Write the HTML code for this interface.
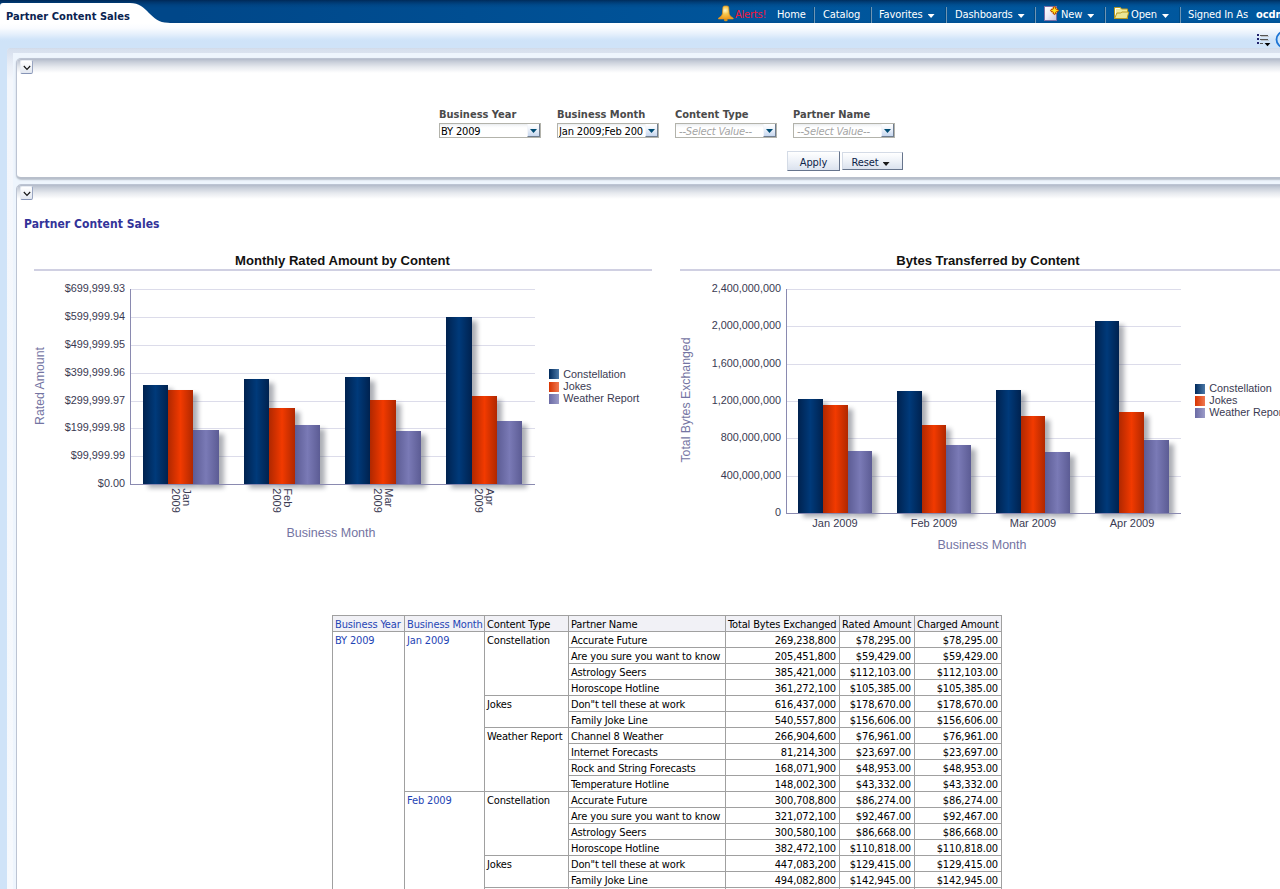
<!DOCTYPE html>
<html>
<head>
<meta charset="utf-8">
<title>Partner Content Sales</title>
<style>
html,body{margin:0;padding:0;}
body{width:1280px;height:889px;overflow:hidden;position:relative;background:#cfe3f8;
 font-family:"DejaVu Sans Condensed","Liberation Sans",sans-serif;font-size:11px;color:#000;}
.abs{position:absolute;}
#hdr{left:0;top:0;width:1280px;height:23px;background:linear-gradient(rgba(0,22,56,.62) 0px,rgba(0,26,64,.40) 2px,rgba(0,30,70,.12) 5px,rgba(0,30,70,0) 8px,rgba(0,30,70,0) 20px,rgba(0,30,70,.12) 23px),linear-gradient(to right,#004789 0px,#004789 180px,#00559b 760px,#00589f 1280px);}
#tab{left:0;top:3px;width:170px;height:20px;}
#tabtxt{left:6px;top:10px;letter-spacing:0.05px;font-weight:bold;font-size:11px;color:#0a2350;white-space:nowrap;line-height:13px;}
#sub{left:0;top:23px;width:1280px;height:26px;background:linear-gradient(#ffffff 0px,#fafcff 5px,#e6f0fc 11px,#d2e5f9 16px,#cfe3f8 18px,#cfe3f8 26px);}
.nav{top:8px;color:#fff;font-size:11px;letter-spacing:-0.12px;white-space:nowrap;line-height:13px;}
.sep{top:7px;width:1px;height:16px;background:#6f95b4;border-left:1px solid #004a84;}
.car{display:inline-block;width:7px;height:4px;background:#fff;clip-path:polygon(0 0,100% 0,50% 100%);margin-left:5px;vertical-align:0px;}
#outer{left:7px;top:48px;width:1290px;height:860px;border-radius:4px;background:#eef5fd;overflow:hidden;}
#otop{left:0;top:0;width:100%;height:5px;background:linear-gradient(#cfd8e6 0px,#d6dfed 1px,#dae2ef 5px);}
#oleft{left:0;top:0;width:6px;height:100%;background:linear-gradient(#d6dfed 0px,#dae2ef 5px,#eaeff7 18px,#f4f7fc 32px,#f6f9fd 100%);}
.panel{left:16px;width:1280px;background:#fff;border:1px solid #bcc4d3;border-radius:5px;}
.pgrad{left:0;top:0;width:100%;height:14px;border-radius:4px 4px 0 0;background:linear-gradient(#b3bbca 0px,#c9cfda 3px,#e6e9ee 8px,#ffffff 14px);}
.colbtn{width:11px;height:12px;border-radius:2px;background:linear-gradient(#ffffff,#e2e7f0);border:1px solid #e8ecf3;border-right-color:#9aa6c2;border-bottom-color:#8694b6;box-sizing:content-box;}
.lbl{font-weight:bold;color:#4a4a4a;font-size:11px;white-space:nowrap;line-height:13px;}
.inp{height:13px;width:100px;border:1px solid #b3b3ab;background:linear-gradient(#e9ebee 0px,#f8f9fa 2px,#ffffff 4px);font-size:11px;line-height:13px;white-space:nowrap;overflow:hidden;}
.inp span{position:absolute;left:1px;top:1px;letter-spacing:-0.15px;}
.inp i{color:#a4a4a4;margin-left:2px;}
.dd{position:absolute;right:0;top:0;width:11px;height:12px;background:linear-gradient(#ffffff,#f2f6fc 35%,#c6d6ee);border-left:1px solid #f4f6fa;border-bottom:1px solid #6f7d90;border-right:1px solid #6f7d90;}
.dd:after{content:"";position:absolute;left:2px;top:5px;width:7px;height:4px;background:#004c74;clip-path:polygon(0 0,100% 0,50% 100%);}
.btn{height:17px;overflow:hidden;letter-spacing:-0.1px;border:1px solid #d4dbe6;border-right-color:#66748c;border-bottom-color:#66748c;background:linear-gradient(#ffffff,#eef2f8 50%,#dbe2ee);font-size:11px;line-height:16px;text-align:center;color:#0d2348;white-space:nowrap;}
.car2{display:inline-block;width:7px;height:4px;background:#1a1a1a;clip-path:polygon(0 0,100% 0,50% 100%);margin-left:4px;vertical-align:0px;}
#ttl{left:24px;top:216px;font-weight:bold;font-size:12px;letter-spacing:0.07px;color:#333399;white-space:nowrap;line-height:16px;}
svg text{font-family:"Liberation Sans",sans-serif;}
table.t{border-collapse:separate;border-spacing:0;position:absolute;left:332px;top:615px;font-size:11px;table-layout:fixed;width:670px;letter-spacing:-0.15px;border-right:1px solid #a0a0a0;border-bottom:1px solid #a0a0a0;}
table.t td{border-left:1px solid #a0a0a0;border-top:1px solid #a0a0a0;padding:2px 3px 0 2px;height:13px;line-height:13px;vertical-align:top;white-space:nowrap;overflow:hidden;}
table.t td.n{text-align:right;}
table.t td.h{background:#f1f1f6;}
table.t td.b{color:#1f45b5;}
</style>
</head>
<body>
<div id="sub" class="abs"></div>
<div id="hdr" class="abs"></div>
<svg id="tab" class="abs" width="170" height="20" viewBox="0 0 170 20"><path d="M0,3 Q0,0 3,0 L130,0 C148,0 150,19.8 168,19.8 L170,20 L0,20 Z" fill="#ffffff"/></svg>
<div id="tabtxt" class="abs">Partner Content Sales</div>

<svg class="abs" style="left:718px;top:5px" width="16" height="17" viewBox="0 0 16 17"><defs><radialGradient id="bg" cx="0.45" cy="0.35" r="0.6"><stop offset="0" stop-color="#fff6c8"/><stop offset="0.45" stop-color="#f6c850"/><stop offset="1" stop-color="#eea024"/></radialGradient></defs><ellipse cx="7.8" cy="15" rx="1.9" ry="1.3" fill="#d8941c"/><path d="M4.9,2.6 Q4.9,1 6.6,1 L9,1 Q10.7,1 10.7,2.6 L11.2,9 Q11.8,11.6 15.2,13.2 L15.2,13.9 L0.4,13.9 L0.4,13.2 Q3.8,11.6 4.4,9 Z" fill="url(#bg)" stroke="#e89418" stroke-width="0.7"/></svg>
<div class="abs nav" style="left:735px;color:#f5143a;letter-spacing:-0.2px">Alerts!</div>
<div class="abs nav" style="left:777px">Home</div>
<div class="abs sep" style="left:813px"></div>
<div class="abs nav" style="left:823px">Catalog</div>
<div class="abs sep" style="left:870px"></div>
<div class="abs nav" style="left:879px">Favorites<span class="car"></span></div>
<div class="abs sep" style="left:945px"></div>
<div class="abs nav" style="left:955px">Dashboards<span class="car"></span></div>
<div class="abs sep" style="left:1034px"></div>
<svg class="abs" style="left:1044px;top:5px" width="16" height="17" viewBox="0 0 16 17"><defs><linearGradient id="pg" x1="0" y1="0" x2="1" y2="1"><stop offset="0" stop-color="#ffffff"/><stop offset="0.5" stop-color="#ecebf6"/><stop offset="1" stop-color="#c4c2dc"/></linearGradient></defs><rect x="0.5" y="1.5" width="12" height="14" fill="url(#pg)" stroke="#7d6fa5" stroke-width="1"/><path d="M10.5,0.8 L15.2,5.5 L10.5,10.2 L5.8,5.5 Z" fill="#b84600"/><path d="M10.5,1.2 L11.4,4.6 L14.8,5.5 L11.4,6.4 L10.5,9.8 L9.6,6.4 L6.2,5.5 L9.6,4.6 Z" fill="#ffe21c"/><circle cx="10.5" cy="5.5" r="1.7" fill="#ffe21c"/><circle cx="8.6" cy="3.6" r="0.55" fill="#ffd030"/><circle cx="12.4" cy="3.6" r="0.55" fill="#ffd030"/><circle cx="8.6" cy="7.4" r="0.55" fill="#ffd030"/><circle cx="12.4" cy="7.4" r="0.55" fill="#ffd030"/></svg>
<div class="abs nav" style="left:1061px">New<span class="car"></span></div>
<div class="abs sep" style="left:1104px"></div>
<svg class="abs" style="left:1114px;top:7px" width="16" height="13" viewBox="0 0 16 13"><path d="M0.5,0.5 L6.5,0.5 L7.5,2 L13.5,2 L13.5,11.5 L0.5,11.5 Z" fill="#efeb9e" stroke="#b8981e" stroke-width="1"/><path d="M1.5,1.5 L5.8,1.5 M1.5,1.5 L1.5,9" stroke="#fffff0" stroke-width="1" fill="none"/><path d="M2.9,6 L6.8,6 L7.8,5 L14.8,5 L13,11.5 L0.5,11.5 Z" fill="#e9e596" stroke="#b8981e" stroke-width="1"/></svg>
<div class="abs nav" style="left:1131px">Open<span class="car"></span></div>
<div class="abs sep" style="left:1179px"></div>
<div class="abs nav" style="left:1188px">Signed In As</div>
<div class="abs nav" style="left:1256px;font-weight:bold">ocdm</div>
<svg class="abs" style="left:1256px;top:30px" width="24" height="18" viewBox="0 0 24 18"><rect x="1" y="4" width="2" height="2" fill="#22226c"/><rect x="1" y="8" width="2" height="2" fill="#22226c"/><rect x="1" y="12" width="2" height="2" fill="#22226c"/><rect x="4" y="5" width="8" height="1" fill="#555"/><rect x="5" y="6" width="8" height="1" fill="#aaa" opacity=".6"/><rect x="4" y="9" width="8" height="1" fill="#555"/><rect x="5" y="10" width="8" height="1" fill="#aaa" opacity=".6"/><rect x="4" y="13" width="3" height="1" fill="#555"/><path d="M8.6,13 L14.4,13 L11.5,16.2 Z" fill="#000"/><circle cx="28.5" cy="9.5" r="8" fill="#cfe6fb" stroke="#1c74d4" stroke-width="1.8"/></svg>

<div id="outer" class="abs"><div id="oleft" class="abs"></div><div id="otop" class="abs"></div></div>

<div class="abs panel" style="top:58px;height:118px;border-bottom:2px solid #b8bfcb;box-shadow:0 1px 1.5px rgba(170,178,190,.75);">
 <div class="abs pgrad"></div>
 <div class="abs colbtn" style="left:3px;top:1px"><svg class="abs" style="left:2px;top:4px" width="8" height="6" viewBox="0 0 8 6"><path d="M0.8,1 L4,4.4 L7.2,1" stroke="#111" stroke-width="1.1" fill="none"/></svg></div>
</div>
<div class="abs lbl" style="left:439px;top:108px">Business Year</div>
<div class="abs lbl" style="left:557px;top:108px">Business Month</div>
<div class="abs lbl" style="left:675px;top:108px">Content Type</div>
<div class="abs lbl" style="left:793px;top:108px">Partner Name</div>
<div class="abs inp" style="left:439px;top:123px"><span>BY 2009</span><div class="dd"></div></div>
<div class="abs inp" style="left:557px;top:123px"><span style="max-width:84px;overflow:hidden">Jan 2009;Feb 2009</span><div class="dd"></div></div>
<div class="abs inp" style="left:675px;top:123px"><span><i>--Select Value--</i></span><div class="dd"></div></div>
<div class="abs inp" style="left:793px;top:123px"><span><i>--Select Value--</i></span><div class="dd"></div></div>
<div class="abs btn" style="left:787px;top:151px;width:51px;height:18px;line-height:21px">Apply</div>
<div class="abs btn" style="left:842px;top:152px;width:55px;padding-right:4px;height:16px;line-height:19px">Reset<span class="car2"></span></div>

<!--P2S-->
<div class="abs panel" style="top:184px;height:760px;">
 <div class="abs pgrad"></div>
 <div class="abs colbtn" style="left:3px;top:1px"><svg class="abs" style="left:2px;top:4px" width="8" height="6" viewBox="0 0 8 6"><path d="M0.8,1 L4,4.4 L7.2,1" stroke="#111" stroke-width="1.1" fill="none"/></svg></div>
</div>
<div id="ttl" class="abs">Partner Content Sales</div>
<svg class="abs" style="left:0;top:0" width="1280" height="600" viewBox="0 0 1280 600"><defs>
<linearGradient id="c1" x1="0" x2="1" y1="0" y2="0"><stop offset="0" stop-color="#00224f"/><stop offset="0.5" stop-color="#003a7a"/><stop offset="1" stop-color="#00224f"/></linearGradient>
<linearGradient id="c2" x1="0" x2="1" y1="0" y2="0"><stop offset="0" stop-color="#b02800"/><stop offset="0.5" stop-color="#f23a00"/><stop offset="1" stop-color="#b02800"/></linearGradient>
<linearGradient id="c3" x1="0" x2="1" y1="0" y2="0"><stop offset="0" stop-color="#5c5c94"/><stop offset="0.5" stop-color="#7a7ab6"/><stop offset="1" stop-color="#5c5c94"/></linearGradient>
<linearGradient id="l1" x1="0" x2="1" y1="0" y2="0"><stop offset="0" stop-color="#002a5c"/><stop offset="1" stop-color="#4a78a8"/></linearGradient>
<linearGradient id="l2" x1="0" x2="1" y1="0" y2="0"><stop offset="0" stop-color="#d83400"/><stop offset="1" stop-color="#f07850"/></linearGradient>
<linearGradient id="l3" x1="0" x2="1" y1="0" y2="0"><stop offset="0" stop-color="#6a6aa4"/><stop offset="1" stop-color="#9c9cc8"/></linearGradient>
<filter id="sh" x="-30%" y="-10%" width="180%" height="130%" color-interpolation-filters="sRGB"><feGaussianBlur in="SourceAlpha" stdDeviation="2.7"/><feOffset dx="4.5" dy="4"/><feComponentTransfer><feFuncR type="linear" slope="0" intercept="0.30"/><feFuncG type="linear" slope="0" intercept="0.32"/><feFuncB type="linear" slope="0" intercept="0.37"/><feFuncA type="linear" slope="0.47"/></feComponentTransfer></filter>
</defs>
<text x="342.5" y="265" text-anchor="middle" font-size="13.1" font-weight="bold" fill="#111">Monthly Rated Amount by Content</text>
<rect x="34" y="269" width="618" height="2" fill="#d0d0e2"/>
<rect x="130" y="289" width="405" height="1" fill="#dcdcea"/>
<text x="125" y="292.2" text-anchor="end" font-size="10.85" fill="#3a3a52">$699,999.93</text>
<rect x="130" y="317" width="405" height="1" fill="#dcdcea"/>
<text x="125" y="320.2" text-anchor="end" font-size="10.85" fill="#3a3a52">$599,999.94</text>
<rect x="130" y="345" width="405" height="1" fill="#dcdcea"/>
<text x="125" y="348.2" text-anchor="end" font-size="10.85" fill="#3a3a52">$499,999.95</text>
<rect x="130" y="373" width="405" height="1" fill="#dcdcea"/>
<text x="125" y="376.2" text-anchor="end" font-size="10.85" fill="#3a3a52">$399,999.96</text>
<rect x="130" y="401" width="405" height="1" fill="#dcdcea"/>
<text x="125" y="404.2" text-anchor="end" font-size="10.85" fill="#3a3a52">$299,999.97</text>
<rect x="130" y="428" width="405" height="1" fill="#dcdcea"/>
<text x="125" y="431.2" text-anchor="end" font-size="10.85" fill="#3a3a52">$199,999.98</text>
<rect x="130" y="456" width="405" height="1" fill="#dcdcea"/>
<text x="125" y="459.2" text-anchor="end" font-size="10.85" fill="#3a3a52">$99,999.99</text>
<text x="125" y="487.2" text-anchor="end" font-size="10.85" fill="#3a3a52">$0.00</text>
<rect x="130" y="289" width="1" height="196.0" fill="#8a8ab0"/>
<rect x="143" y="385" width="25" height="99.0" fill="url(#c1)" filter="url(#sh)"/>
<rect x="168" y="390" width="25" height="94.0" fill="url(#c2)" filter="url(#sh)"/>
<rect x="193" y="430" width="26" height="54.0" fill="url(#c3)" filter="url(#sh)"/>
<rect x="244" y="379" width="25" height="105.0" fill="url(#c1)" filter="url(#sh)"/>
<rect x="269" y="408" width="26" height="76.0" fill="url(#c2)" filter="url(#sh)"/>
<rect x="295" y="425" width="25" height="59.0" fill="url(#c3)" filter="url(#sh)"/>
<rect x="345" y="377" width="25" height="107.0" fill="url(#c1)" filter="url(#sh)"/>
<rect x="370" y="400" width="26" height="84.0" fill="url(#c2)" filter="url(#sh)"/>
<rect x="396" y="431" width="25" height="53.0" fill="url(#c3)" filter="url(#sh)"/>
<rect x="446" y="317" width="26" height="167.0" fill="url(#c1)" filter="url(#sh)"/>
<rect x="472" y="396" width="25" height="88.0" fill="url(#c2)" filter="url(#sh)"/>
<rect x="497" y="421" width="25" height="63.0" fill="url(#c3)" filter="url(#sh)"/>
<rect x="143" y="385" width="25" height="99.0" fill="url(#c1)"/>
<rect x="168" y="390" width="25" height="94.0" fill="url(#c2)"/>
<rect x="193" y="430" width="26" height="54.0" fill="url(#c3)"/>
<rect x="244" y="379" width="25" height="105.0" fill="url(#c1)"/>
<rect x="269" y="408" width="26" height="76.0" fill="url(#c2)"/>
<rect x="295" y="425" width="25" height="59.0" fill="url(#c3)"/>
<rect x="345" y="377" width="25" height="107.0" fill="url(#c1)"/>
<rect x="370" y="400" width="26" height="84.0" fill="url(#c2)"/>
<rect x="396" y="431" width="25" height="53.0" fill="url(#c3)"/>
<rect x="446" y="317" width="26" height="167.0" fill="url(#c1)"/>
<rect x="472" y="396" width="25" height="88.0" fill="url(#c2)"/>
<rect x="497" y="421" width="25" height="63.0" fill="url(#c3)"/>
<rect x="130" y="484" width="405" height="1" fill="#8a8ab0"/>
<text transform="translate(44,386) rotate(-90)" text-anchor="middle" font-size="12.3" fill="#7474a2">Rated Amount</text>
<text x="331" y="537" text-anchor="middle" font-size="12.5" fill="#7474a2">Business Month</text>
<text transform="translate(182.7,488.3) rotate(90)" font-size="11" fill="#3a3a52">Jan</text>
<text transform="translate(172.0,488.3) rotate(90)" font-size="11" fill="#3a3a52">2009</text>
<text transform="translate(283.7,488.3) rotate(90)" font-size="11" fill="#3a3a52">Feb</text>
<text transform="translate(273.0,488.3) rotate(90)" font-size="11" fill="#3a3a52">2009</text>
<text transform="translate(384.7,488.3) rotate(90)" font-size="11" fill="#3a3a52">Mar</text>
<text transform="translate(374.0,488.3) rotate(90)" font-size="11" fill="#3a3a52">2009</text>
<text transform="translate(485.7,488.3) rotate(90)" font-size="11" fill="#3a3a52">Apr</text>
<text transform="translate(475.0,488.3) rotate(90)" font-size="11" fill="#3a3a52">2009</text>
<rect x="549" y="369" width="10" height="10" fill="url(#l1)"/>
<text x="563.3" y="377.6" font-size="10.8" fill="#3a3a52">Constellation</text>
<rect x="549" y="382" width="10" height="10" fill="url(#l2)"/>
<text x="563.3" y="389.8" font-size="10.8" fill="#3a3a52">Jokes</text>
<rect x="549" y="394" width="10" height="10" fill="url(#l3)"/>
<text x="563.3" y="401.6" font-size="10.8" fill="#3a3a52">Weather Report</text>
<text x="988" y="265" text-anchor="middle" font-size="13.1" font-weight="bold" fill="#111">Bytes Transferred by Content</text>
<rect x="680" y="269" width="600" height="2" fill="#d0d0e2"/>
<rect x="786" y="289" width="395" height="1" fill="#dcdcea"/>
<text x="781" y="292.2" text-anchor="end" font-size="10.85" fill="#3a3a52">2,400,000,000</text>
<rect x="786" y="326" width="395" height="1" fill="#dcdcea"/>
<text x="781" y="329.2" text-anchor="end" font-size="10.85" fill="#3a3a52">2,000,000,000</text>
<rect x="786" y="364" width="395" height="1" fill="#dcdcea"/>
<text x="781" y="367.2" text-anchor="end" font-size="10.85" fill="#3a3a52">1,600,000,000</text>
<rect x="786" y="401" width="395" height="1" fill="#dcdcea"/>
<text x="781" y="404.2" text-anchor="end" font-size="10.85" fill="#3a3a52">1,200,000,000</text>
<rect x="786" y="438" width="395" height="1" fill="#dcdcea"/>
<text x="781" y="441.2" text-anchor="end" font-size="10.85" fill="#3a3a52">800,000,000</text>
<rect x="786" y="476" width="395" height="1" fill="#dcdcea"/>
<text x="781" y="479.2" text-anchor="end" font-size="10.85" fill="#3a3a52">400,000,000</text>
<text x="781" y="516.2" text-anchor="end" font-size="10.85" fill="#3a3a52">0</text>
<rect x="786" y="289" width="1" height="225.0" fill="#8a8ab0"/>
<rect x="798" y="399" width="25" height="114.0" fill="url(#c1)" filter="url(#sh)"/>
<rect x="823" y="405" width="25" height="108.0" fill="url(#c2)" filter="url(#sh)"/>
<rect x="848" y="451" width="24" height="62.0" fill="url(#c3)" filter="url(#sh)"/>
<rect x="897" y="391" width="25" height="122.0" fill="url(#c1)" filter="url(#sh)"/>
<rect x="922" y="425" width="24" height="88.0" fill="url(#c2)" filter="url(#sh)"/>
<rect x="946" y="445" width="25" height="68.0" fill="url(#c3)" filter="url(#sh)"/>
<rect x="996" y="390" width="25" height="123.0" fill="url(#c1)" filter="url(#sh)"/>
<rect x="1021" y="416" width="24" height="97.0" fill="url(#c2)" filter="url(#sh)"/>
<rect x="1045" y="452" width="25" height="61.0" fill="url(#c3)" filter="url(#sh)"/>
<rect x="1095" y="321" width="24" height="192.0" fill="url(#c1)" filter="url(#sh)"/>
<rect x="1119" y="412" width="25" height="101.0" fill="url(#c2)" filter="url(#sh)"/>
<rect x="1144" y="440" width="25" height="73.0" fill="url(#c3)" filter="url(#sh)"/>
<rect x="798" y="399" width="25" height="114.0" fill="url(#c1)"/>
<rect x="823" y="405" width="25" height="108.0" fill="url(#c2)"/>
<rect x="848" y="451" width="24" height="62.0" fill="url(#c3)"/>
<rect x="897" y="391" width="25" height="122.0" fill="url(#c1)"/>
<rect x="922" y="425" width="24" height="88.0" fill="url(#c2)"/>
<rect x="946" y="445" width="25" height="68.0" fill="url(#c3)"/>
<rect x="996" y="390" width="25" height="123.0" fill="url(#c1)"/>
<rect x="1021" y="416" width="24" height="97.0" fill="url(#c2)"/>
<rect x="1045" y="452" width="25" height="61.0" fill="url(#c3)"/>
<rect x="1095" y="321" width="24" height="192.0" fill="url(#c1)"/>
<rect x="1119" y="412" width="25" height="101.0" fill="url(#c2)"/>
<rect x="1144" y="440" width="25" height="73.0" fill="url(#c3)"/>
<rect x="786" y="513" width="395" height="1" fill="#8a8ab0"/>
<text transform="translate(690,400) rotate(-90)" text-anchor="middle" font-size="12.3" fill="#7474a2">Total Bytes Exchanged</text>
<text x="982" y="549" text-anchor="middle" font-size="12.5" fill="#7474a2">Business Month</text>
<text x="835.0" y="526.5" text-anchor="middle" font-size="11" fill="#3a3a52">Jan 2009</text>
<text x="934.0" y="526.5" text-anchor="middle" font-size="11" fill="#3a3a52">Feb 2009</text>
<text x="1033.0" y="526.5" text-anchor="middle" font-size="11" fill="#3a3a52">Mar 2009</text>
<text x="1132.0" y="526.5" text-anchor="middle" font-size="11" fill="#3a3a52">Apr 2009</text>
<rect x="1195" y="384" width="10" height="10" fill="url(#l1)"/>
<text x="1209.3" y="391.8" font-size="10.8" fill="#3a3a52">Constellation</text>
<rect x="1195" y="396" width="10" height="10" fill="url(#l2)"/>
<text x="1209.3" y="403.8" font-size="10.8" fill="#3a3a52">Jokes</text>
<rect x="1195" y="408" width="10" height="10" fill="url(#l3)"/>
<text x="1209.3" y="416.4" font-size="10.8" fill="#3a3a52">Weather Report</text>
</svg>
<table class="t" cellspacing="0" cellpadding="0"><colgroup><col style="width:72px"><col style="width:80px"><col style="width:84px"><col style="width:157px"><col style="width:114px"><col style="width:75px"><col style="width:87px"></colgroup>
<tr><td class="h b">Business Year</td><td class="h b">Business Month</td><td class="h">Content Type</td><td class="h">Partner Name</td><td class="h n">Total Bytes Exchanged</td><td class="h n">Rated Amount</td><td class="h n">Charged Amount</td></tr>
<tr><td class="b" rowspan="18">BY 2009</td><td class="b" rowspan="10">Jan 2009</td><td rowspan="4">Constellation</td><td>Accurate Future</td><td class="n">269,238,800</td><td class="n">$78,295.00</td><td class="n">$78,295.00</td></tr>
<tr><td>Are you sure you want to know</td><td class="n">205,451,800</td><td class="n">$59,429.00</td><td class="n">$59,429.00</td></tr>
<tr><td>Astrology Seers</td><td class="n">385,421,000</td><td class="n">$112,103.00</td><td class="n">$112,103.00</td></tr>
<tr><td>Horoscope Hotline</td><td class="n">361,272,100</td><td class="n">$105,385.00</td><td class="n">$105,385.00</td></tr>
<tr><td rowspan="2">Jokes</td><td>Don&quot;t tell these at work</td><td class="n">616,437,000</td><td class="n">$178,670.00</td><td class="n">$178,670.00</td></tr>
<tr><td>Family Joke Line</td><td class="n">540,557,800</td><td class="n">$156,606.00</td><td class="n">$156,606.00</td></tr>
<tr><td rowspan="4">Weather Report</td><td>Channel 8 Weather</td><td class="n">266,904,600</td><td class="n">$76,961.00</td><td class="n">$76,961.00</td></tr>
<tr><td>Internet Forecasts</td><td class="n">81,214,300</td><td class="n">$23,697.00</td><td class="n">$23,697.00</td></tr>
<tr><td>Rock and String Forecasts</td><td class="n">168,071,900</td><td class="n">$48,953.00</td><td class="n">$48,953.00</td></tr>
<tr><td>Temperature Hotline</td><td class="n">148,002,300</td><td class="n">$43,332.00</td><td class="n">$43,332.00</td></tr>
<tr><td class="b" rowspan="8">Feb 2009</td><td rowspan="4">Constellation</td><td>Accurate Future</td><td class="n">300,708,800</td><td class="n">$86,274.00</td><td class="n">$86,274.00</td></tr>
<tr><td>Are you sure you want to know</td><td class="n">321,072,100</td><td class="n">$92,467.00</td><td class="n">$92,467.00</td></tr>
<tr><td>Astrology Seers</td><td class="n">300,580,100</td><td class="n">$86,668.00</td><td class="n">$86,668.00</td></tr>
<tr><td>Horoscope Hotline</td><td class="n">382,472,100</td><td class="n">$110,818.00</td><td class="n">$110,818.00</td></tr>
<tr><td rowspan="2">Jokes</td><td>Don&quot;t tell these at work</td><td class="n">447,083,200</td><td class="n">$129,415.00</td><td class="n">$129,415.00</td></tr>
<tr><td>Family Joke Line</td><td class="n">494,082,800</td><td class="n">$142,945.00</td><td class="n">$142,945.00</td></tr>
<tr><td rowspan="2">Weather Report</td><td>Channel 8 Weather</td><td class="n">253,471,900</td><td class="n">$73,014.00</td><td class="n">$73,014.00</td></tr>
<tr><td>Internet Forecasts</td><td class="n">92,115,400</td><td class="n">$26,530.00</td><td class="n">$26,530.00</td></tr>
</table>
<!--P2E-->
</body>
</html>
